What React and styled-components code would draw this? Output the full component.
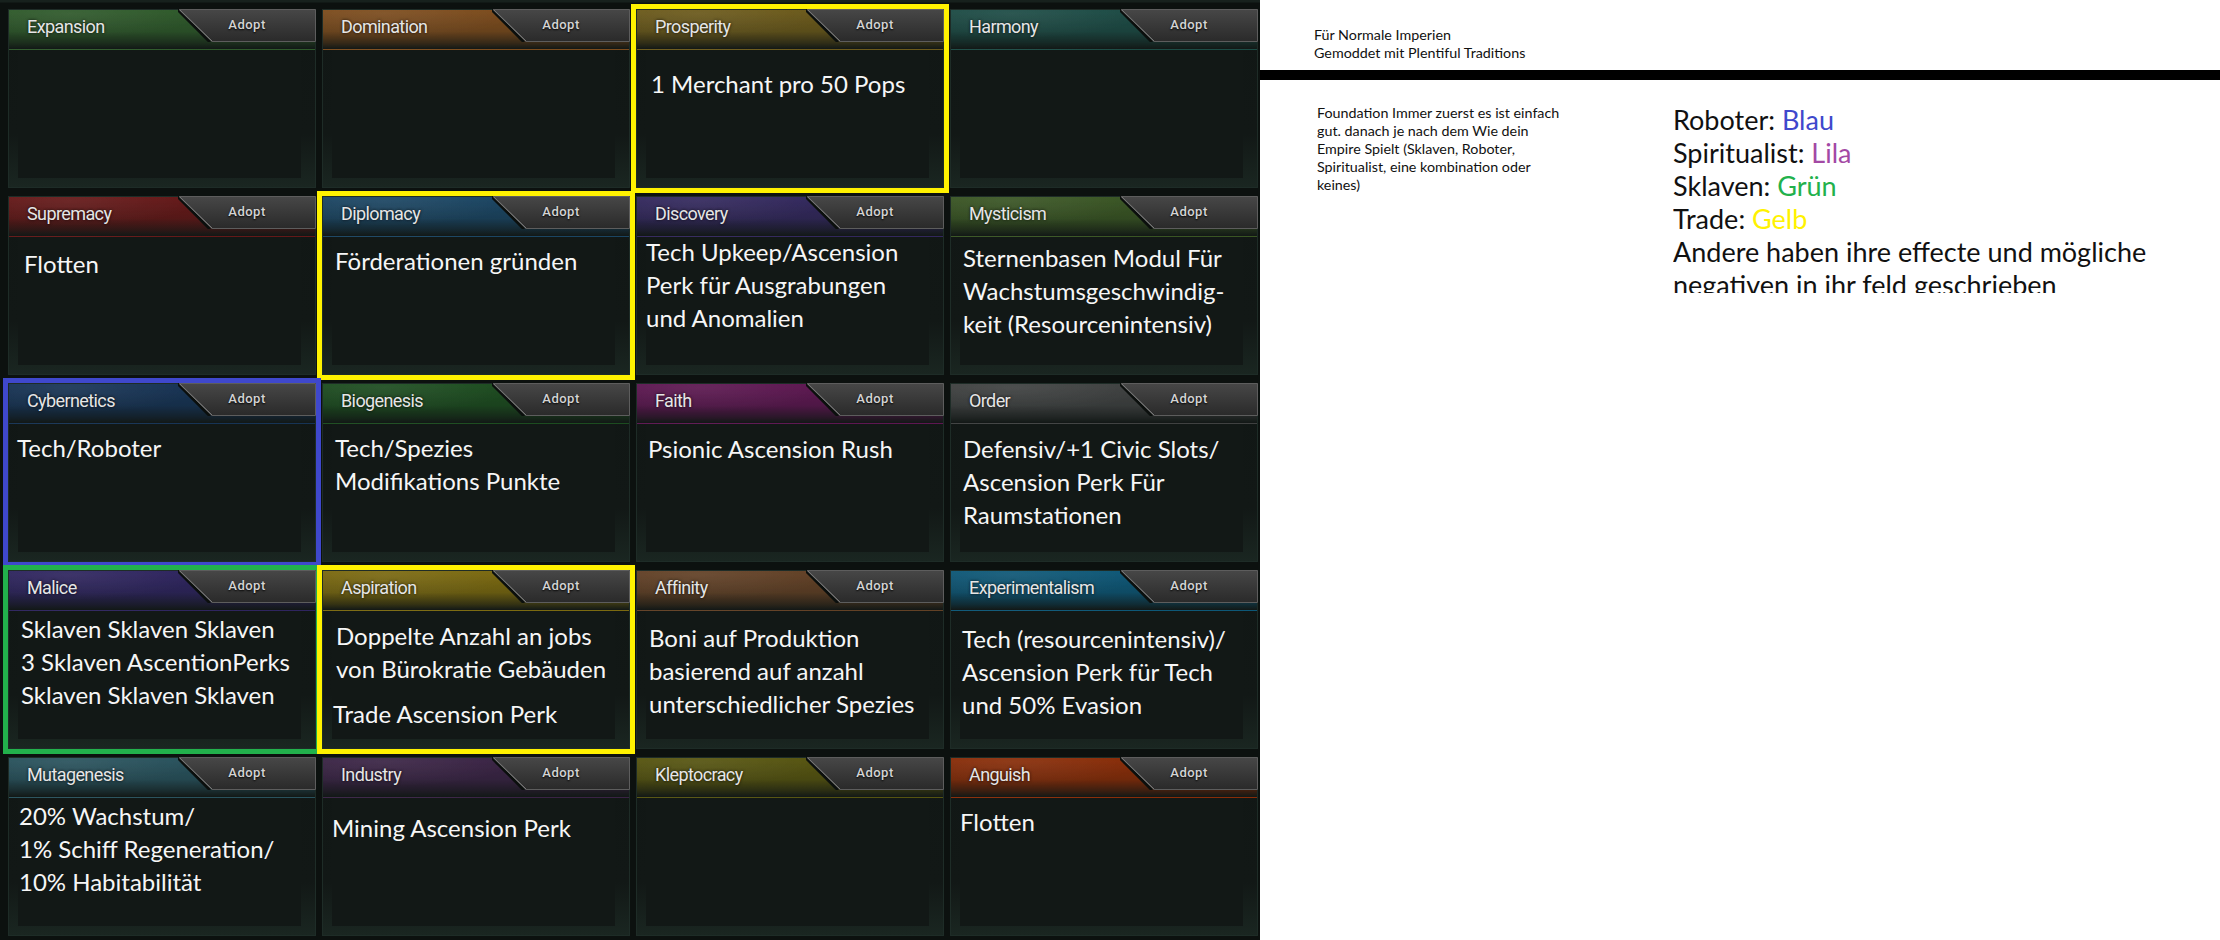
import styled, { createGlobalStyle } from "styled-components";

const GlobalStyle = createGlobalStyle`
  html, body {
    margin: 0;
    padding: 0;
    width: 2220px;
    height: 940px;
    overflow: hidden;
    background: #ffffff;
  }
  * {
    box-sizing: border-box;
  }
`;

const traditions = [
  { name: "Expansion", color: "#2f5a2b", lines: [] },
  { name: "Domination", color: "#7d4c1d", lines: [] },
  { name: "Prosperity", color: "#6c5a1b", outline: "#fff200", x: 14, y: 17, lines: ["1 Merchant pro 50 Pops"] },
  { name: "Harmony", color: "#1d4c46", lines: [] },

  { name: "Supremacy", color: "#651818", x: 15, y: 10, lines: ["Flotten"] },
  { name: "Diplomacy", color: "#1b4664", outline: "#fff200", x: 12, y: 7, lines: ["Förderationen gründen"] },
  { name: "Discovery", color: "#33285e", x: 9, y: -2, lines: ["Tech Upkeep/Ascension", "Perk für Ausgrabungen", "und Anomalien"] },
  { name: "Mysticism", color: "#3a5624", x: 12, y: 4, lines: ["Sternenbasen Modul Für", "Wachstumsgeschwindig-", "keit (Resourcenintensiv)"] },

  { name: "Cybernetics", color: "#173456", outline: "#3f48cc", x: 8, y: 7, lines: ["Tech/Roboter"] },
  { name: "Biogenesis", color: "#1d4d20", x: 12, y: 7, lines: ["Tech/Spezies", "Modifikations Punkte"] },
  { name: "Faith", color: "#5e1752", x: 11, y: 8, lines: ["Psionic Ascension Rush"] },
  { name: "Order", color: "#404242", x: 12, y: 8, lines: ["Defensiv/+1 Civic Slots/", "Ascension Perk Für", "Raumstationen"] },

  { name: "Malice", color: "#2f2560", outline: "#22b14c", x: 12, y: 1, lines: ["Sklaven Sklaven Sklaven", "3 Sklaven AscentionPerks", "Sklaven Sklaven Sklaven"] },
  { name: "Aspiration", color: "#7c6a10", outline: "#fff200", x: 13, y: 8, lines: ["Doppelte Anzahl an jobs", "von Bürokratie Gebäuden"], extra: "Trade Ascension Perk" },
  { name: "Affinity", color: "#634126", x: 12, y: 10, lines: ["Boni auf Produktion", "basierend auf anzahl", "unterschiedlicher Spezies"] },
  { name: "Experimentalism", color: "#0e5878", x: 11, y: 11, lines: ["Tech (resourcenintensiv)/", "Ascension Perk für Tech", "und 50% Evasion"] },

  { name: "Mutagenesis", color: "#29535e", x: 10, y: 1, lines: ["20% Wachstum/", "1% Schiff Regeneration/", "10% Habitabilität"] },
  { name: "Industry", color: "#3b2446", x: 9, y: 13, lines: ["Mining Ascension Perk"] },
  { name: "Kleptocracy", color: "#575510", lines: [] },
  { name: "Anguish", color: "#8a2d08", x: 9, y: 7, lines: ["Flotten"] },
];

const Page = styled.div`
  display: flex;
  width: 2220px;
  height: 940px;
`;

const Board = styled.div`
  width: 1260px;
  height: 940px;
  flex-shrink: 0;
  background: linear-gradient(180deg, #17211d 0px, #17211d 2px, #0c110f 3px);
  display: grid;
  grid-template-columns: repeat(4, 308px);
  grid-template-rows: repeat(5, 179px);
  column-gap: 6px;
  row-gap: 8px;
  padding: 9px 0 0 8px;
`;

const Card = styled.div`
  display: flex;
  flex-direction: column;
  background: linear-gradient(180deg, #111715 0%, #121816 70%, #1a2621 100%);
  border: 1px solid #1e2c27;
  outline: ${(p) => (p.$outline ? `5px solid ${p.$outline}` : "none")};
  outline-offset: 0;
`;

const Header = styled.div`
  height: 40px;
  display: flex;
  align-items: flex-start;
  flex-shrink: 0;
  background:
    radial-gradient(ellipse 60% 90% at 20% 10%, rgba(255, 255, 255, 0.07), transparent 70%),
    linear-gradient(180deg, ${(p) => p.$color} 0%, ${(p) => p.$color}cc 55%, ${(p) => p.$color}55 85%, #121816 100%);
  border-bottom: 1px solid ${(p) => p.$color}88;
`;

const Title = styled.div`
  flex: 1;
  padding: 6px 0 0 18px;
  font-family: Roboto, "Liberation Sans", sans-serif;
  font-size: 18px;
  letter-spacing: -0.6px;
  color: #e6e6e6;
  text-shadow: 0 0 3px rgba(0, 0, 0, 0.9);
  white-space: nowrap;
`;

const Tab = styled.div`
  width: 138px;
  height: 33px;
  display: grid;
  margin-top: -1px;
  margin-right: -1px;

  & > * {
    grid-area: 1 / 1;
  }
`;

const TabLabel = styled.span`
  display: flex;
  align-items: center;
  justify-content: center;
  padding: 0 0 3px 0;
  font-family: Roboto, "Liberation Sans", sans-serif;
  font-size: 13px;
  font-weight: 500;
  letter-spacing: 0.5px;
  color: #d4d4d4;
  text-shadow: 0 1px 2px #000;
`;

const Body = styled.div`
  flex: 1;
  display: grid;
  min-height: 0;
  & > * {
    grid-area: 1 / 1;
  }
`;

const Inset = styled.div`
  margin: 0 14px 9px 9px;
  background: #121816;
`;

const Notes = styled.div`
  margin-top: ${(p) => p.$y}px;
  padding-left: ${(p) => p.$x}px;
  font-family: Lato, "Noto Sans", sans-serif;
  font-size: 24px;
  line-height: 33px;
  color: #f6f6f6;
  white-space: nowrap;
`;

const Extra = styled.div`
  margin-top: 12px;
  margin-left: -3px;
`;

const AdoptTab = () => (
  <Tab>
    <svg width="138" height="33" viewBox="0 0 138 33">
      <defs>
        <linearGradient id="tabfill" x1="0" y1="0" x2="0" y2="1">
          <stop offset="0" stopColor="#474747" />
          <stop offset="1" stopColor="#2a2a2a" />
        </linearGradient>
      </defs>
      <polyline points="-1,0 32,33" stroke="#0b0f0d" strokeWidth="3" fill="none" />
      <polygon points="1,0.5 137.5,0.5 137.5,32.5 34,32.5" fill="url(#tabfill)" stroke="#5d5d5d" strokeWidth="1" />
      <line x1="2" y1="1" x2="34" y2="32" stroke="#7a7a7a" strokeWidth="1" />
    </svg>
    <TabLabel>Adopt</TabLabel>
  </Tab>
);

const TraditionCard = ({ t }) => (
  <Card $outline={t.outline}>
    <Header $color={t.color}>
      <Title>{t.name}</Title>
      <AdoptTab />
    </Header>
    <Body>
      <Inset />
      <Notes $x={t.x || 12} $y={t.y || 8}>
        {t.lines.map((l, i) => (
          <div key={i}>{l}</div>
        ))}
        {t.extra && <Extra>{t.extra}</Extra>}
      </Notes>
    </Body>
  </Card>
);

const Side = styled.div`
  flex: 1;
  display: flex;
  flex-direction: column;
  background: #ffffff;
  font-family: Lato, "Noto Sans", sans-serif;
  color: #111;
`;

const Heading = styled.div`
  height: 70px;
  padding: 26px 0 0 54px;
  font-size: 14.3px;
  line-height: 18px;
`;

const Band = styled.div`
  height: 10px;
  background: #000;
`;

const Columns = styled.div`
  display: flex;
  padding: 24px 0 0 57px;
`;

const SmallNote = styled.div`
  width: 250px;
  font-size: 14.3px;
  line-height: 18px;
  white-space: nowrap;
`;

const Legend = styled.div`
  margin-left: 106px;
  margin-top: -1px;
  height: 190px;
  overflow: hidden;
  font-size: 27px;
  line-height: 33px;
  white-space: nowrap;
`;

const Swatch = styled.span`
  color: ${(p) => p.$c};
`;

export default function App() {
  return (
    <>
      <GlobalStyle />
      <Page>
        <Board>
          {traditions.map((t) => (
            <TraditionCard key={t.name} t={t} />
          ))}
        </Board>
        <Side>
          <Heading>
            Für Normale Imperien
            <br />
            Gemoddet mit Plentiful Traditions
          </Heading>
          <Band />
          <Columns>
            <SmallNote>
              Foundation Immer zuerst es ist einfach
              <br />
              gut. danach je nach dem Wie dein
              <br />
              Empire Spielt (Sklaven, Roboter,
              <br />
              Spiritualist, eine kombination oder
              <br />
              keines)
            </SmallNote>
            <Legend>
              Roboter: <Swatch $c="#3f48cc">Blau</Swatch>
              <br />
              Spiritualist: <Swatch $c="#a349a4">Lila</Swatch>
              <br />
              Sklaven: <Swatch $c="#22b14c">Grün</Swatch>
              <br />
              Trade: <Swatch $c="#fff200">Gelb</Swatch>
              <br />
              Andere haben ihre effecte und mögliche
              <br />
              negativen in ihr feld geschrieben
            </Legend>
          </Columns>
        </Side>
      </Page>
    </>
  );
}
